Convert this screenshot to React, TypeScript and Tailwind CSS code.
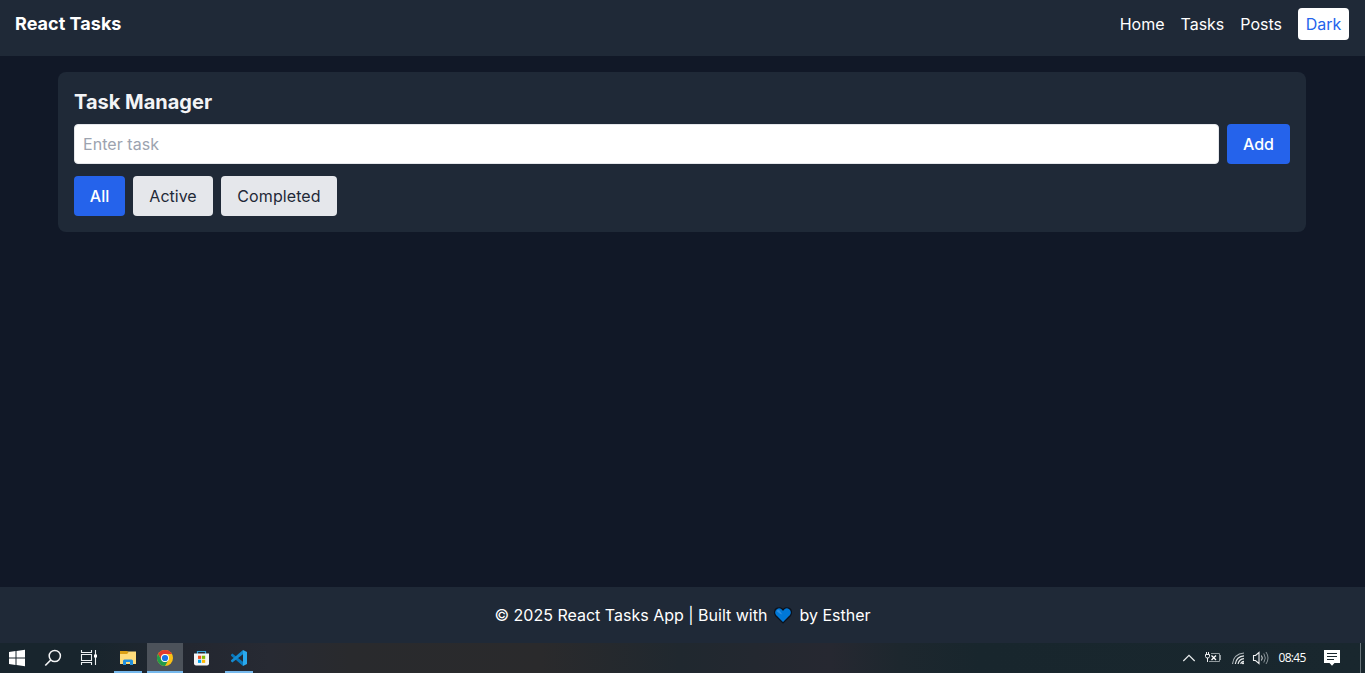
import React from "react";

const filters = [
  { name: "All", style: "w-[51px] bg-[#2563eb] font-medium text-white" },
  { name: "Active", style: "w-20 bg-[#e5e7eb] text-[#1f2937]" },
  { name: "Completed", style: "w-[116px] bg-[#e5e7eb] tracking-[0.1px] text-[#1f2937]" },
];

function Header() {
  return (
    <header className="flex h-14 items-start justify-between bg-[#1f2937] pt-2 pr-4 pl-[15px] text-white">
      <h1 className="text-[18px] leading-8 font-bold tracking-[0.03px]">React Tasks</h1>
      <nav className="flex items-center gap-4 leading-8">
        <a>Home</a>
        <a>Tasks</a>
        <a>Posts</a>
        <button className="h-8 w-[51px] rounded bg-white text-[#2563eb]">Dark</button>
      </nav>
    </header>
  );
}

function TaskManager() {
  return (
    <section className="mt-4 ml-[58px] h-40 w-[1248px] rounded-lg bg-[#1f2937] p-4">
      <h2 className="mb-2 text-xl leading-7 font-bold text-[#f3f4f6]">Task Manager</h2>
      <div className="flex gap-2">
        <input
          className="h-10 min-w-0 flex-1 rounded border border-[#e5e7eb] bg-white px-2 tracking-[0.06px] placeholder:text-[#9ca3af]"
          placeholder="Enter task"
        />
        <button className="h-10 w-[63px] rounded bg-[#2563eb] font-medium text-white">Add</button>
      </div>
      <div className="mt-3 flex gap-2">
        {filters.map(({ name, style }) => (
          <button key={name} className={`h-10 rounded ${style}`}>
            {name}
          </button>
        ))}
      </div>
    </section>
  );
}

function Heart() {
  return (
    <svg className="mx-[2.5px] inline-block align-[-3px]" width="18" height="17" viewBox="0 0 18 17">
      <path
        d="M9 15.900 1.800 8.700C-.2 6.500.3 3 2.400 1.600 4.700.1 7.500.8 9 2.900 10.500.8 13.300.1 15.600 1.600c2.100 1.400 2.600 4.900.6 7.100z"
        fill="#0078d7"
        stroke="#0b111b"
        strokeWidth="1.300"
      />
      <path d="M2.700 4.200c.5-1.200 1.500-1.700 2.500-1.300L8.300 7.500 6 6.800z" fill="#2b8fe2" />
    </svg>
  );
}

function Taskbar() {
  return (
    <div className="flex h-[30px] items-stretch bg-[linear-gradient(90deg,#18252d_0px,#18252d_90px,#232730_190px,#272a33_270px,#292a2d_350px,#2a2a2c_540px,#20282f_680px,#262831_830px,#1d272e_900px,#18262d_980px,#19272e_1365px)]">
      <svg width="110" height="30" viewBox="0 0 110 30" fill="none">
        <path d="M9 8.900l6.500-.9v6.500H9zM16.500 7.900 25 6.700v7.800h-8.500zM9 15.500h6.500V22L9 21.100zM16.500 15.500H25v7.800l-8.500-1.200z" fill="#fff" />
        <circle cx="54.800" cy="13" r="5.600" stroke="#f4f5f6" strokeWidth="1.500" />
        <path d="m50.800 17-5.500 5.500" stroke="#f4f5f6" strokeWidth="1.700" />
        <path d="M81.500 7v2.500h10V7M81.500 22v-2.500h10V22M81.500 11.500h10v6h-10zM95.500 7v15" stroke="#eceff1" strokeWidth="1.100" />
        <path d="M94 11.500h3v3h-3z" fill="#fff" />
      </svg>
      <div className="flex">
        <div className="ml-1 w-7 border-b-2 border-[#76b9ed]">
          <svg width="28" height="28" viewBox="0 0 28 28">
            <path d="M6 8.500h16V21H6z" fill="#ffdc7b" />
            <path d="M6 8h7l1.500 1.500L13 11H6z" fill="#dca015" />
            <path d="M9 22v-4q0-1.500 1.500-1.500h7q1.500 0 1.500 1.500v4h-3v-3h-4v3z" fill="#2490dc" />
          </svg>
        </div>
        <div className="ml-[5px] w-9 border-b-2 border-[#76b9ed] bg-[#4c525a]">
          <svg width="36" height="28" viewBox="0 0 36 28">
            <circle cx="18" cy="15" r="8" fill="#fbc116" />
            <path d="M11.070 11A8 8 0 0 1 24.930 11H18a4 4 0 0 0-3.460 6z" fill="#e33b2e" />
            <path d="M11.070 11A8 8 0 0 0 18 23l3.460-6a4 4 0 0 1-6.920 0z" fill="#229a4b" />
            <circle cx="18" cy="15" r="4" fill="#fff" />
            <circle cx="18" cy="15" r="3.100" fill="#1a73e8" />
          </svg>
        </div>
        <svg width="37" height="30" viewBox="0 0 37 30">
          <path d="M14.500 11V8.500h8V11" fill="none" stroke="#35a7dc" strokeWidth="1.200" />
          <path d="M11 10.500h15v10q0 2-2 2H13q-2 0-2-2z" fill="#f4f5f6" />
          <path d="M15 12.700h3.200v3.200H15z" fill="#f25022" />
          <path d="M19 12.700h3.200v3.200H19z" fill="#7fba00" />
          <path d="M15 16.700h3.200v3.200H15z" fill="#00a4ef" />
          <path d="M19 16.700h3.200v3.200H19z" fill="#ffb900" />
        </svg>
        <div className="ml-[5px] w-7 border-b-2 border-[#76b9ed]">
          <svg width="28" height="28" viewBox="0 0 28 28">
            <path d="m6 11.700 1.300-1.100L18 18.700V23L6 12.800z" fill="#0878bd" />
            <path d="m6 18.300 1.300 1.100L18 11.300V7L6 17.200z" fill="#148bd0" />
            <path d="m18 7 4 2v12l-4 2z" fill="#2aa9ee" />
          </svg>
        </div>
      </div>
      <div className="ml-auto flex">
        <svg width="93" height="30" viewBox="1180 0 93 30" fill="none">
          <path d="m1183.300 18 5.700-5.700 5.700 5.700" stroke="#e9eced" strokeWidth="1.200" />
          <path d="M1206.500 9v2M1208.500 9v2M1205.500 11.500h4v2q0 1.500-2 1.500t-2-1.500zM1207.500 15v4" stroke="#f0f1f2" />
          <path d="M1211 10.500h8.500v8H1209M1220.500 12v5" stroke="#929b9f" />
          <path d="m1211.500 12.500 4.500 4.500M1216 12.500l-4.500 4.500" stroke="#fff" strokeWidth="1.300" />
          <path d="M1232.500 21q1-10 11.500-11" stroke="#aab2b6" strokeWidth="1.100" />
          <path d="M1235.300 21q1-7.500 8.700-8.200M1238.100 21q.8-5 5.900-5.400M1240.800 21q.4-2.400 3.200-2.600" stroke="#e4e7e8" strokeWidth="1.200" />
          <circle cx="1243" cy="20.200" r="1" fill="#fff" />
          <path d="M1253.500 12.500h2l3.500-3v11l-3.500-3h-2z" stroke="#f0f1f2" strokeWidth="1.100" />
          <path d="M1261.500 12.500q1.500 2.500 0 5" stroke="#e0e3e4" />
          <path d="M1263.800 10.500q3 4.500 0 9M1266 9q4 6 0 12" stroke="#879196" />
        </svg>
        <span className="w-10 pl-[5.5px] font-['Open_Sans','Noto_Sans',sans-serif] text-[12px] leading-[30px] tracking-[-0.7px] text-white">
          08:45
        </span>
        <svg width="52" height="30" viewBox="1313 0 52 30" fill="none">
          <path d="M1324 7h16v13h-5.500l-2.500 2.800-2.500-2.800h-5.500z" fill="#fff" />
          <path d="M1327 10.500h10M1327 13.500h10M1327 16.500h7" stroke="#19272e" />
          <path d="M1360.500 0v30" stroke="#69757b" />
        </svg>
      </div>
    </div>
  );
}

export default function App() {
  return (
    <div className="flex h-[673px] w-[1365px] flex-col overflow-hidden bg-[#111827] font-['Inter',sans-serif] text-base">
      <Header />
      <main className="flex-1">
        <TaskManager />
      </main>
      <footer className="h-14 bg-[#1f2937] p-4 text-center leading-6 text-white">
        © 2025 React Tasks App | Built with <Heart /> by Esther
      </footer>
      <Taskbar />
    </div>
  );
}
